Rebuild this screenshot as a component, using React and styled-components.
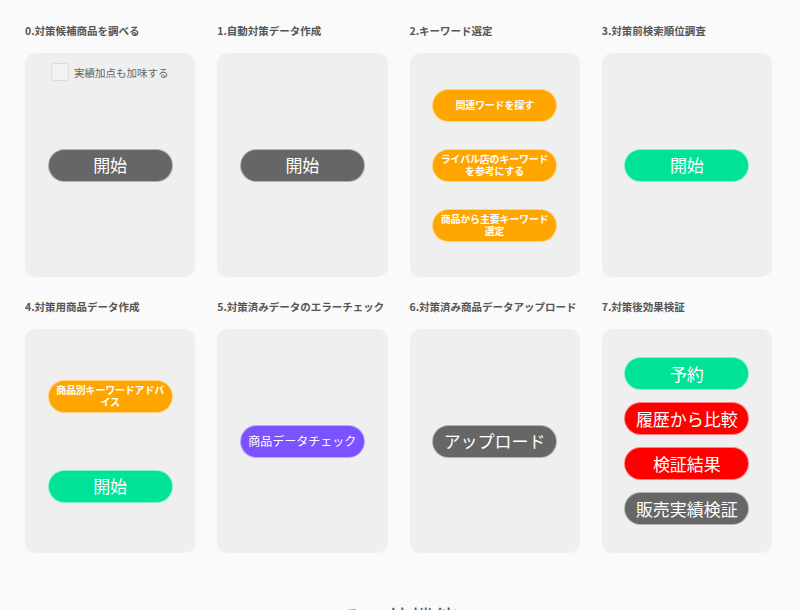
import React, { useState } from "react";
import styled, { createGlobalStyle } from "styled-components";

const GlobalStyle = createGlobalStyle`
    body {
        margin: 0;
        background: #fafafa;
        font-family: "Noto Sans CJK JP", "Noto Sans", sans-serif;
    }
`;

const COLORS = {
    gray: "#666666",
    green: "#00e396",
    orange: "#ffa500",
    purple: "#7b52ff",
    red: "#ff0000",
};

const steps = [
    { title: "0.対策候補商品を調べる", checkbox: "実績加点も加味する", gap: 27, buttons: [{ label: "開始", color: "gray" }] },
    { title: "1.自動対策データ作成", gap: 27, buttons: [{ label: "開始", color: "gray" }] },
    {
        title: "2.キーワード選定",
        gap: 27,
        buttons: [
            { label: "関連ワードを探す", color: "orange", small: true },
            { label: "ライバル店のキーワードを参考にする", color: "orange", small: true },
            { label: "商品から主要キーワード選定", color: "orange", small: true },
        ],
    },
    { title: "3.対策前検索順位調査", gap: 27, buttons: [{ label: "開始", color: "green" }] },
    {
        title: "4.対策用商品データ作成",
        gap: 57,
        buttons: [
            { label: "商品別キーワードアドバイス", color: "orange", small: true },
            { label: "開始", color: "green" },
        ],
    },
    { title: "5.対策済みデータのエラーチェック", gap: 27, buttons: [{ label: "商品データチェック", color: "purple", medium: true }] },
    { title: "6.対策済み商品データアップロード", gap: 27, buttons: [{ label: "アップロード", color: "gray" }] },
    {
        title: "7.対策後効果検証",
        gap: 12,
        buttons: [
            { label: "予約", color: "green" },
            { label: "履歴から比較", color: "red" },
            { label: "検証結果", color: "red" },
            { label: "販売実績検証", color: "gray" },
        ],
    },
];

const App = () => {
    const [checked, setChecked] = useState(false);

    return (
        <>
            <GlobalStyle />
            <Page>
                <StepGrid>
                    {steps.map((step) => (
                        <Step key={step.title}>
                            <StepTitle>{step.title}</StepTitle>
                            <Card $withOption={!!step.checkbox}>
                                {step.checkbox && (
                                    <OptionRow>
                                        <CheckBox
                                            $checked={checked}
                                            onClick={() => setChecked(!checked)}
                                        />
                                        <span>{step.checkbox}</span>
                                    </OptionRow>
                                )}
                                <ButtonStack $gap={step.gap}>
                                    {step.buttons.map((b) => (
                                        <PillButton
                                            key={b.label}
                                            $color={COLORS[b.color]}
                                            $small={b.small}
                                            $medium={b.medium}
                                        >
                                            {b.label}
                                        </PillButton>
                                    ))}
                                </ButtonStack>
                            </Card>
                        </Step>
                    ))}
                </StepGrid>
                <SectionHeading>その他機能</SectionHeading>
            </Page>
        </>
    );
};

const Page = styled.main`
    padding: 23px 28px 0 25px;
    height: 610px;
    box-sizing: border-box;
    overflow: hidden;
`;

const StepGrid = styled.section`
    display: grid;
    grid-template-columns: repeat(4, minmax(0, 1fr));
    column-gap: 22px;
    row-gap: 22px;
`;

const Step = styled.article`
    display: flex;
    flex-direction: column;
    min-width: 0;
`;

const StepTitle = styled.h3`
    margin: 0 0 14px;
    font-size: 10.5px;
    line-height: 16px;
    font-weight: 700;
    color: #555555;
    white-space: nowrap;
`;

const Card = styled.div`
    height: 224px;
    background: #efefef;
    border-radius: 10px;
    box-sizing: border-box;
    display: grid;
    grid-template-rows: ${(p) => (p.$withOption ? "1fr auto 1fr" : "1fr")};
    align-items: ${(p) => (p.$withOption ? "start" : "center")};
    justify-items: center;
`;

const OptionRow = styled.label`
    justify-self: start;
    display: flex;
    align-items: center;
    gap: 5px;
    padding: 10px 0 0 26px;
    font-size: 10.5px;
    color: #666666;
    cursor: pointer;
`;

const CheckBox = styled.span`
    width: 16px;
    height: 16px;
    border: 1px solid #dcdcdc;
    border-radius: 3px;
    background: ${(p) => (p.$checked ? "#00e396" : "#f2f2f2")};
`;

const ButtonStack = styled.div`
    display: flex;
    flex-direction: column;
    align-items: center;
    gap: ${(p) => p.$gap}px;
`;

const PillButton = styled.button`
    width: 125px;
    height: 33px;
    box-sizing: border-box;
    padding: 0 3px;
    border: 1px solid rgba(255, 255, 255, 0.5);
    border-radius: 17px;
    background: ${(p) => p.$color};
    color: #ffffff;
    font-family: inherit;
    font-size: ${(p) => (p.$small ? "10px" : p.$medium ? "12px" : "17px")};
    font-weight: ${(p) => (p.$small ? 700 : 400)};
    line-height: ${(p) => (p.$small ? "12px" : "20px")};
    letter-spacing: ${(p) => (p.$small ? "-0.2px" : "0")};
    cursor: pointer;
`;

const SectionHeading = styled.h2`
    margin: 47px 0 0;
    text-align: center;
    font-size: 24px;
    font-weight: 400;
    color: #555555;
`;

export default App;
